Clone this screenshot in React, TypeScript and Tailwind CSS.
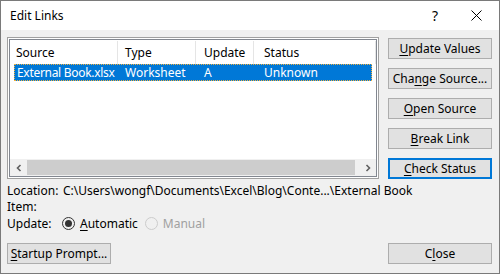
import React from 'react';

const font = { fontFamily: '"Noto Sans", "Open Sans", sans-serif' };

interface BtnProps {
  children: React.ReactNode;
  focused?: boolean;
  className?: string;
}

const Btn: React.FC<BtnProps> = ({ children, focused, className }) => (
  <div
    className={`flex h-[21px] w-[104px] items-center justify-center bg-[#e1e1e1] text-[12px] text-black ${
      focused ? 'border-2 border-[#0078d7]' : 'border border-[#adadad]'
    } ${className ?? ''}`}
  >
    {children}
  </div>
);

const U: React.FC<{ children: React.ReactNode }> = ({ children }) => <span className="underline underline-offset-2">{children}</span>;

const cols = [
  { title: 'Source', head: 'w-[108px] pl-[6px]', cell: 'w-[110px] pl-[2px] tracking-[-0.3px]', value: 'External Book.xlsx' },
  { title: 'Type', head: 'w-[78px] pl-[7px]', cell: 'w-[79px]', value: 'Worksheet' },
  { title: 'Update', head: 'w-[58px] pl-[8px]', cell: 'w-[60px]', value: 'A' },
  { title: 'Status', head: 'flex-1 pl-[10px]', cell: 'flex-1', value: 'Unknown' },
];

export default function App() {
  return (
    <div className="h-[274px] w-[500px] border border-[#7a7a7a] bg-[#f0f0f0] text-[12px] leading-none text-black" style={font}>
      {/* title bar */}
      <div className="flex h-[29px] items-center bg-white pl-[9px]">
        <span className="text-[12px]">Edit Links</span>
        <span className="ml-auto mr-[33px] text-[14px]">?</span>
        <svg width="11" height="11" viewBox="0 0 11 11" className="mr-[17px]">
          <path d="M0.5 0.5 L10.5 10.5 M10.5 0.5 L0.5 10.5" stroke="#000" strokeWidth="1" />
        </svg>
      </div>

      <div className="flex pl-[6px] pt-[7px]">
        {/* list box */}
        <div className="h-[142px] w-[372px] border border-[#a0a0a0] bg-white p-px">
          <div className="flex h-full flex-col border border-[#828790] bg-white">
            <div className="flex h-[24px] items-stretch pt-[1px]">
              {cols.map((c) => (
                <div key={c.title} className={`${c.head} flex items-center whitespace-nowrap border-r border-[#e5e5e5]`}>
                  {c.title}
                </div>
              ))}
            </div>
            <div className="mx-[4px] flex h-[17px] items-center border border-dotted border-[#f0b040] bg-[#0078d7] text-white">
              {cols.map((c) => (
                <div key={c.title} className={`${c.cell} whitespace-nowrap`}>
                  {c.value}
                </div>
              ))}
            </div>
            <div className="flex-1" />
            {/* horizontal scrollbar */}
            <div className="flex h-[17px] bg-[#f0f0f0]">
              <div className="flex w-[17px] items-center justify-center">
                <svg width="8" height="8" viewBox="0 0 8 8">
                  <path d="M5.5 1 L2.5 4 L5.5 7" stroke="#606060" strokeWidth="1.6" fill="none" />
                </svg>
              </div>
              <div className="my-[1px] w-[328px] bg-[#cdcdcd]" />
              <div className="flex-1" />
              <div className="flex w-[17px] items-center justify-center">
                <svg width="8" height="8" viewBox="0 0 8 8">
                  <path d="M2.5 1 L5.5 4 L2.5 7" stroke="#606060" strokeWidth="1.6" fill="none" />
                </svg>
              </div>
            </div>
          </div>
        </div>

        {/* right buttons */}
        <div className="ml-[9px] mt-px flex flex-col gap-[9px]">
          <Btn>
            <U>U</U>pdate Values
          </Btn>
          <Btn>
            Cha<U>n</U>ge Source...
          </Btn>
          <Btn>
            <U>O</U>pen Source
          </Btn>
          <Btn>
            <U>B</U>reak Link
          </Btn>
          <Btn focused>
            <U>C</U>heck Status
          </Btn>
        </div>
      </div>

      {/* info */}
      <div className="flex flex-col pl-[6px] pt-[4px]">
        <div className="flex h-[16px] items-center">
          <span className="w-[56px]">Location:</span>
          <span className="whitespace-nowrap">C:\Users\wongf\Documents\Excel\Blog\Conte...\External Book</span>
        </div>
        <div className="flex h-[16px] items-center">Item:</div>
        <div className="flex h-[17px] items-center">
          <span className="w-[55px]">Update:</span>
          <span className="flex h-[13px] w-[13px] items-center justify-center rounded-full border border-[#333]">
            <span className="h-[7px] w-[7px] rounded-full bg-[#333]" />
          </span>
          <span className="ml-[5px]">
            <U>A</U>utomatic
          </span>
          <span className="ml-[7px] h-[13px] w-[13px] rounded-full border border-[#cccccc]" />
          <span className="ml-[5px] text-[#a0a0a0]">Manual</span>
        </div>
      </div>

      {/* bottom buttons */}
      <div className="flex items-center pl-[6px] pr-[7px] pt-[11px]">
        <Btn>
          <U>S</U>tartup Prompt...
        </Btn>
        <Btn className="ml-auto">
          C<U>l</U>ose
        </Btn>
      </div>
    </div>
  );
}
